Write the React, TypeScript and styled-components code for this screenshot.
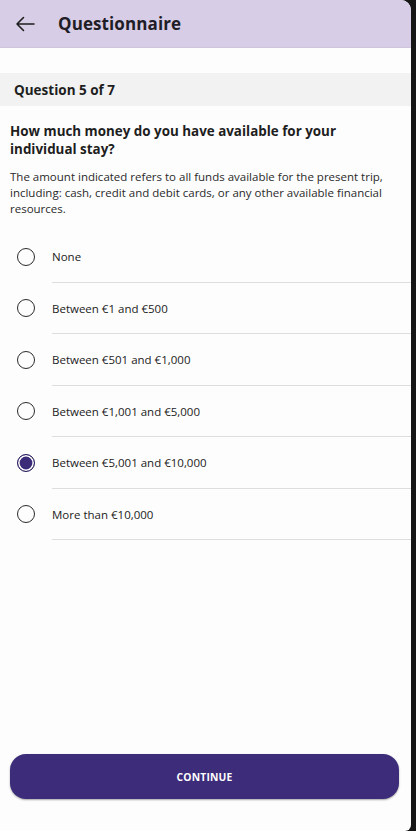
import React, { useState } from "react";
import styled, { createGlobalStyle } from "styled-components";

const Global = createGlobalStyle`
  html, body { margin: 0; padding: 0; background: #151515; }
  body { font-family: "Open Sans", "Noto Sans", sans-serif; }
  * { box-sizing: border-box; }
`;

const Frame = styled.div`
  display: flex;
  width: 416px;
  height: 831px;
  background: #161616;
`;

const Screen = styled.div`
  width: 411px;
  height: 831px;
  background: #fdfdfd;
  display: flex;
  flex-direction: column;
  border-top-right-radius: 10px;
  border-bottom-right-radius: 6px;
  overflow: hidden;
`;

const Header = styled.header`
  height: 48px;
  flex: none;
  background: #d7cde6;
  display: flex;
  align-items: center;
  padding-left: 14px;
  gap: 22px;
  border-bottom: 1px solid #cfc6dc;
`;

const BackButton = styled.button`
  border: 0;
  background: transparent;
  padding: 0;
  width: 22px;
  height: 22px;
  display: flex;
  align-items: center;
  justify-content: center;
  color: #1e1e1e;
`;

const Title = styled.h1`
  margin: 0;
  font-size: 17px;
  font-weight: 700;
  color: #1f1d26;
  letter-spacing: 0.1px;
`;

const QuestionBar = styled.div`
  margin-top: 25px;
  height: 33px;
  flex: none;
  background: #f2f2f2;
  display: flex;
  align-items: center;
  padding-left: 14px;
  font-size: 13.5px;
  font-weight: 700;
  color: #1e1e1e;
`;

const Body = styled.div`
  padding: 16px 12px 0 10px;
`;

const Heading = styled.h2`
  margin: 0;
  font-size: 13.4px;
  line-height: 18px;
  font-weight: 700;
  color: #1e1e1e;
  padding-right: 40px;
`;

const Description = styled.p`
  margin: 11px 0 0;
  font-size: 11.5px;
  line-height: 16px;
  color: #2a2a2a;
`;

const Options = styled.div`
  margin-top: 14px;
  display: flex;
  flex-direction: column;
`;

const Option = styled.label`
  height: 51.5px;
  display: flex;
  align-items: center;
  position: relative;
  cursor: pointer;
  padding-left: 17px;
  &::after {
    content: "";
    position: absolute;
    left: 52px;
    right: 0;
    bottom: 0;
    height: 1px;
    background: #dedede;
  }
`;

const Radio = styled.span<{ $checked: boolean }>`
  width: 18px;
  height: 18px;
  border-radius: 50%;
  border: 1.6px solid #2b2b2b;
  flex: none;
  background: ${(p) => (p.$checked ? "#3b2b79" : "transparent")};
  box-shadow: ${(p) => (p.$checked ? "inset 0 0 0 1.6px #ffffff" : "none")};
  ${(p) => (p.$checked ? "border-color: #2a1f5c;" : "")}
`;

const OptionText = styled.span`
  margin-left: 17px;
  font-size: 11.5px;
  color: #222;
`;

const Spacer = styled.div`
  flex: 1;
`;

const Continue = styled.button`
  margin: 0 12px 32px 10px;
  height: 45px;
  flex: none;
  border: 0;
  border-radius: 16px;
  background: #3d2c79;
  color: #ffffff;
  font-family: "Open Sans", "Noto Sans", sans-serif;
  font-size: 10.3px;
  font-weight: 700;
  letter-spacing: 0.2px;
  box-shadow: 0 1px 2px rgba(0, 0, 0, 0.35);
`;

const options = [
  "None",
  "Between €1 and €500",
  "Between €501 and €1,000",
  "Between €1,001 and €5,000",
  "Between €5,001 and €10,000",
  "More than €10,000",
];

export default function App() {
  const [selected, setSelected] = useState(4);
  return (
    <Frame>
      <Global />
      <Screen>
        <Header>
          <BackButton aria-label="Back">
            <svg width="20" height="16" viewBox="0 0 20 16" fill="none">
              <path d="M19 8H2M8.5 1.5L2 8l6.5 6.5" stroke="#1e1e1e" strokeWidth="1.6" strokeLinecap="round" strokeLinejoin="round" />
            </svg>
          </BackButton>
          <Title>Questionnaire</Title>
        </Header>
        <QuestionBar>Question 5 of 7</QuestionBar>
        <Body>
          <Heading>How much money do you have available for your individual stay?</Heading>
          <Description>
            The amount indicated refers to all funds available for the present trip, including: cash, credit and debit cards, or any other available financial resources.
          </Description>
        </Body>
        <Options>
          {options.map((o, i) => (
            <Option key={o} onClick={() => setSelected(i)}>
              <Radio $checked={selected === i} />
              <OptionText>{o}</OptionText>
            </Option>
          ))}
        </Options>
        <Spacer />
        <Continue>CONTINUE</Continue>
      </Screen>
    </Frame>
  );
}
